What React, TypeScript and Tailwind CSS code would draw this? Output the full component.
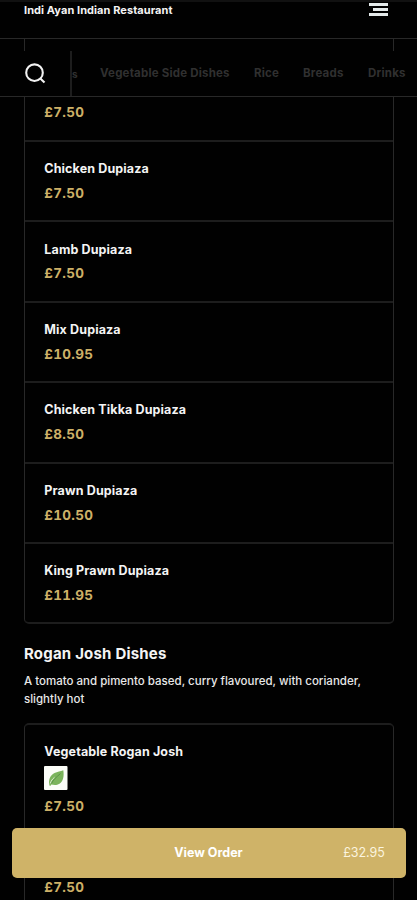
interface MenuItem {
  name: string
  price: string
}

const dupiazaDishes: MenuItem[] = [
  { name: 'Chicken Dupiaza', price: '£7.50' },
  { name: 'Lamb Dupiaza', price: '£7.50' },
  { name: 'Mix Dupiaza', price: '£10.95' },
  { name: 'Chicken Tikka Dupiaza', price: '£8.50' },
  { name: 'Prawn Dupiaza', price: '£10.50' },
  { name: 'King Prawn Dupiaza', price: '£11.95' },
]

const categories = [
  { label: 'Vegetable Side Dishes', width: 'w-[130px]' },
  { label: 'Rice', width: 'w-[25px]' },
  { label: 'Breads', width: 'w-[41px]' },
  { label: 'Drinks', width: 'w-[40px]' },
]

function LeafIcon() {
  return (
    <svg className="block h-6 w-6" viewBox="0 0 24 24">
      <rect width="23.500" height="24" rx="1" fill="#fbfdf8" />
      <path d="M5.600 19.800C4 14.500 6 9.200 10.500 7C13.500 5.500 16.500 5.600 19.300 4.200C20.300 10 19.200 15.200 15.500 17.700C12.700 19.600 9.500 19 7.300 18.500L6.600 19.800Z" fill="#7bb45c" />
      <path d="M7.500 17.500C9 14 12.500 11 16.500 7.500" fill="none" stroke="#5b9446" strokeWidth="1" />
      <path d="M6.200 17.500C7 14.800 8.500 13 10.500 11.300" fill="none" stroke="#dcebd0" strokeWidth="1" />
    </svg>
  )
}

function DishName({ name }: { name: string }) {
  return <h3 className="text-[12.5px] leading-5 font-bold tracking-[0.13px] text-[#f4f4f4]">{name}</h3>
}

function Price({ value }: { value: string }) {
  return (
    <p className="text-[13.5px] leading-6 font-bold tracking-[0.3px] text-[#cdb067] tabular-nums">{value}</p>
  )
}

function ItemRow({ item }: { item: MenuItem }) {
  return (
    <div className="h-[80.4px] border-t-2 border-[#1d1d1d] px-[19.3px] pt-[17.3px]">
      <DishName name={item.name} />
      <div className="pt-[1.7px]">
        <Price value={item.price} />
      </div>
    </div>
  )
}

export default function App() {
  return (
    <div className="relative h-[900px] w-full overflow-hidden bg-[#010101] font-['Inter',sans-serif] text-white">
      {/* Menu */}
      <main className="pr-[23px] pl-6">
        <section className="rounded-b-[5px] border-x border-b-2 border-x-[#282828] border-b-[#1d1d1d]">
          <div className="h-[140px] px-[19.3px] pt-[100px]">
            <Price value="£7.50" />
          </div>
          {dupiazaDishes.map((item) => (
            <ItemRow key={item.name} item={item} />
          ))}
        </section>

        <h2 className="mt-[17.5px] text-[15px] leading-6 font-bold tracking-[0.2px] text-[#f4f4f4]">
          Rogan Josh Dishes
        </h2>
        <p className="mt-[6px] text-[11.5px] leading-[18px] font-medium text-[#e8e8e8]">
          A tomato and pimento based, curry flavoured, with coriander,
          <br />
          slightly hot
        </p>

        <section className="mt-[15px] h-[200px] rounded-t-[5px] border-x border-t-2 border-x-[#282828] border-t-[#1d1d1d] px-[19.3px] pt-[17.3px]">
          <DishName name="Vegetable Rogan Josh" />
          <div className="pt-[4px]">
            <LeafIcon />
          </div>
          <div className="pt-[4.2px]">
            <Price value="£7.50" />
          </div>
          <div className="pt-[56.5px]">
            <Price value="£7.50" />
          </div>
        </section>
      </main>

      {/* Header */}
      <header className="absolute inset-x-0 top-0 flex h-[39px] items-start justify-between border-t-2 border-b border-t-[#111111] border-b-[#282828] bg-[#010101] pr-[29px] pl-6">
        <h1 className="text-[11px] leading-4 font-bold tracking-[0.07px] text-[#f4f4f4]">Indi Ayan Indian Restaurant</h1>
        <button aria-label="Menu" className="flex flex-col items-end gap-[2px] pt-px">
          <span className="h-[3px] w-[19px] bg-[#e4eaea]" />
          <span className="h-[3px] w-[15px] bg-[#e4eaea]" />
          <span className="h-[3px] w-[19px] bg-[#e4eaea]" />
        </button>
      </header>

      {/* Category bar */}
      <nav className="absolute inset-x-0 top-[51px] flex h-[46px] border-b border-[#282828] bg-[#010101]">
        <button aria-label="Search" className="flex w-[72px] shrink-0 items-start border-r-2 border-[#1d1d1d] pt-[12px] pl-[25px]">
          <svg className="h-[21px] w-[21px]" viewBox="0 0 21 21" fill="none" stroke="#f2f2f2" strokeWidth="2.100">
            <circle cx="9.500" cy="9.700" r="8.300" />
            <path d="M15.300 15.500L19.500 19.600" />
          </svg>
        </button>
        <div className="flex items-center gap-6 pt-px text-[11.5px] font-bold tracking-[0.2px] whitespace-nowrap text-[#303030]">
          <span className="w-1 text-[10px]">s</span>
          {categories.map((category) => (
            <span key={category.label} className={category.width}>
              {category.label}
            </span>
          ))}
        </div>
      </nav>

      {/* Basket button */}
      <button className="absolute top-[828px] right-[11px] left-[12px] grid h-[50px] grid-cols-3 items-center rounded-[5px] bg-[#cfb368] pr-[21px] pl-[20px]">
        <span className="col-start-2 text-center text-[12.5px] font-bold">View Order</span>
        <span className="text-right text-[12.5px] text-[#fbf4df]">£32.95</span>
      </button>
    </div>
  )
}
